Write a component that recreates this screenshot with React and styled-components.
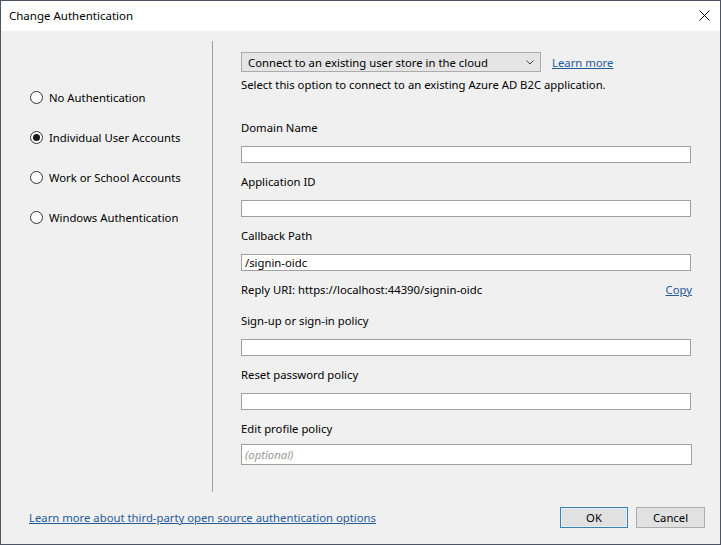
import React from "react";
import styled, { createGlobalStyle } from "styled-components";

const Global = createGlobalStyle`
  html, body { margin: 0; padding: 0; background: #ffffff; }
  body { font-family: "Noto Sans", "Segoe UI", sans-serif; font-size: 11.3px; color: #000; }
  * { box-sizing: border-box; }
`;

const Window = styled.div`
  width: 721px;
  height: 545px;
  border: 1px solid #4b5561;
  display: flex;
  flex-direction: column;
  background: #f0f0f0;
`;

const TitleBar = styled.div`
  height: 30px;
  flex: none;
  background: #ffffff;
  display: flex;
  align-items: center;
  justify-content: space-between;
  padding: 0 10px 2px 8px;
  font-size: 11.5px;
  color: #000;
`;

const CloseBtn = styled.div`
  width: 12px;
  height: 12px;
  display: flex;
  align-items: center;
  justify-content: center;
`;

const Body = styled.div`
  flex: 1;
  display: flex;
  flex-direction: column;
`;

const Main = styled.div`
  display: flex;
  margin-top: 10px;
  height: 451px;
`;

const LeftPane = styled.div`
  width: 211px;
  flex: none;
  padding: 48px 0 0 29px;
  display: flex;
  flex-direction: column;
  gap: 24px;
`;

const RadioRow = styled.label`
  display: flex;
  align-items: center;
  height: 16px;
  gap: 6px;
`;

const RadioCircle = styled.span`
  width: 13px;
  height: 13px;
  border-radius: 50%;
  border: 1px solid #333;
  background: #fff;
  display: flex;
  align-items: center;
  justify-content: center;
  &::after {
    content: "";
    display: ${(p) => (p.$checked ? "block" : "none")};
    width: 7px;
    height: 7px;
    border-radius: 50%;
    background: #1a1a1a;
  }
`;

const Divider = styled.div`
  width: 1px;
  flex: none;
  background: #a0a0a0;
`;

const RightPane = styled.div`
  flex: 1;
  padding: 11px 29px 0 28px;
  display: flex;
  flex-direction: column;
`;

const ComboRow = styled.div`
  display: flex;
  align-items: center;
  gap: 11px;
`;

const Combo = styled.div`
  width: 300px;
  height: 20px;
  border: 1px solid #acacac;
  background: #e5e5e5;
  display: flex;
  align-items: center;
  justify-content: space-between;
  padding: 0 6px 0 6px;
`;

const Link = styled.a`
  color: #235a9a;
  text-decoration: underline;
  cursor: pointer;
`;

const TextLine = styled.div`
  height: 16px;
  line-height: 16px;
  white-space: nowrap;
  margin-top: ${(p) => p.$mt || 0}px;
  display: flex;
  justify-content: space-between;
`;

const Field = styled.div`
  display: flex;
  flex-direction: column;
  margin-top: ${(p) => p.$mt}px;
`;

const Label = styled.div`
  height: 16px;
  line-height: 16px;
`;

const Input = styled.div`
  margin-top: ${(p) => p.$gap || 10}px;
  width: ${(p) => p.$w || 450}px;
  height: ${(p) => p.$h || 17}px;
  border: 1px solid #a0a0a0;
  background: #fff;
  display: flex;
  align-items: center;
  padding-left: 3px;
  line-height: 14px;
`;

const Placeholder = styled.span`
  font-style: italic;
  color: #9a9a9a;
`;

const Footer = styled.div`
  flex: 1;
  display: flex;
  align-items: center;
  justify-content: space-between;
  padding: 0 15px 1px 28px;
`;

const Buttons = styled.div`
  display: flex;
  gap: 8px;
`;

const Button = styled.button`
  width: ${(p) => p.$w}px;
  height: 21px;
  font-family: inherit;
  font-size: 11.3px;
  color: #000;
  background: #e1e1e1;
  border: 1px solid ${(p) => (p.$default ? "#3c7fb1" : "#adadad")};
  box-shadow: ${(p) => (p.$default ? "inset 0 0 0 1px #e5f1fb" : "none")};
  padding: 0;
`;

const fields = [
  { label: "Domain Name", mt: 27 },
  { label: "Application ID", mt: 11 },
  { label: "Callback Path", mt: 11, value: "/signin-oidc" },
];

const fields2 = [
  { label: "Sign-up or sign-in policy", mt: 15 },
  { label: "Reset password policy", mt: 11 },
];

export default function App() {
  return (
    <>
      <Global />
      <Window>
        <TitleBar>
          <span>Change Authentication</span>
          <CloseBtn>
            <svg width="11" height="11" viewBox="0 0 11 11">
              <path d="M0.5 0.5 L10.5 10.5 M10.5 0.5 L0.5 10.5" stroke="#000" strokeWidth="1" fill="none" />
            </svg>
          </CloseBtn>
        </TitleBar>
        <Body>
          <Main>
            <LeftPane>
              <RadioRow><RadioCircle /> No Authentication</RadioRow>
              <RadioRow><RadioCircle $checked /> Individual User Accounts</RadioRow>
              <RadioRow><RadioCircle /> Work or School Accounts</RadioRow>
              <RadioRow><RadioCircle /> Windows Authentication</RadioRow>
            </LeftPane>
            <Divider />
            <RightPane>
              <ComboRow>
                <Combo>
                  <span>Connect to an existing user store in the cloud</span>
                  <svg width="8" height="5" viewBox="0 0 8 5">
                    <path d="M0.5 0.5 L4 4 L7.5 0.5" stroke="#444" strokeWidth="1" fill="none" />
                  </svg>
                </Combo>
                <Link>Learn more</Link>
              </ComboRow>
              <TextLine $mt={5}>Select this option to connect to an existing Azure AD B2C application.</TextLine>
              {fields.map((f) => (
                <Field key={f.label} $mt={f.mt}>
                  <Label>{f.label}</Label>
                  <Input>{f.value}</Input>
                </Field>
              ))}
              <TextLine $mt={11}>
                <span>Reply URI: https://localhost:44390/signin-oidc</span>
                <Link>Copy</Link>
              </TextLine>
              {fields2.map((f) => (
                <Field key={f.label} $mt={f.mt}>
                  <Label>{f.label}</Label>
                  <Input />
                </Field>
              ))}
              <Field $mt={11}>
                <Label>Edit profile policy</Label>
                <Input $gap={7} $h={21} $w={451}>
                  <Placeholder>(optional)</Placeholder>
                </Input>
              </Field>
            </RightPane>
          </Main>
          <Footer>
            <Link>Learn more about third-party open source authentication options</Link>
            <Buttons>
              <Button $default $w={68}>OK</Button>
              <Button $w={69}>Cancel</Button>
            </Buttons>
          </Footer>
        </Body>
      </Window>
    </>
  );
}
